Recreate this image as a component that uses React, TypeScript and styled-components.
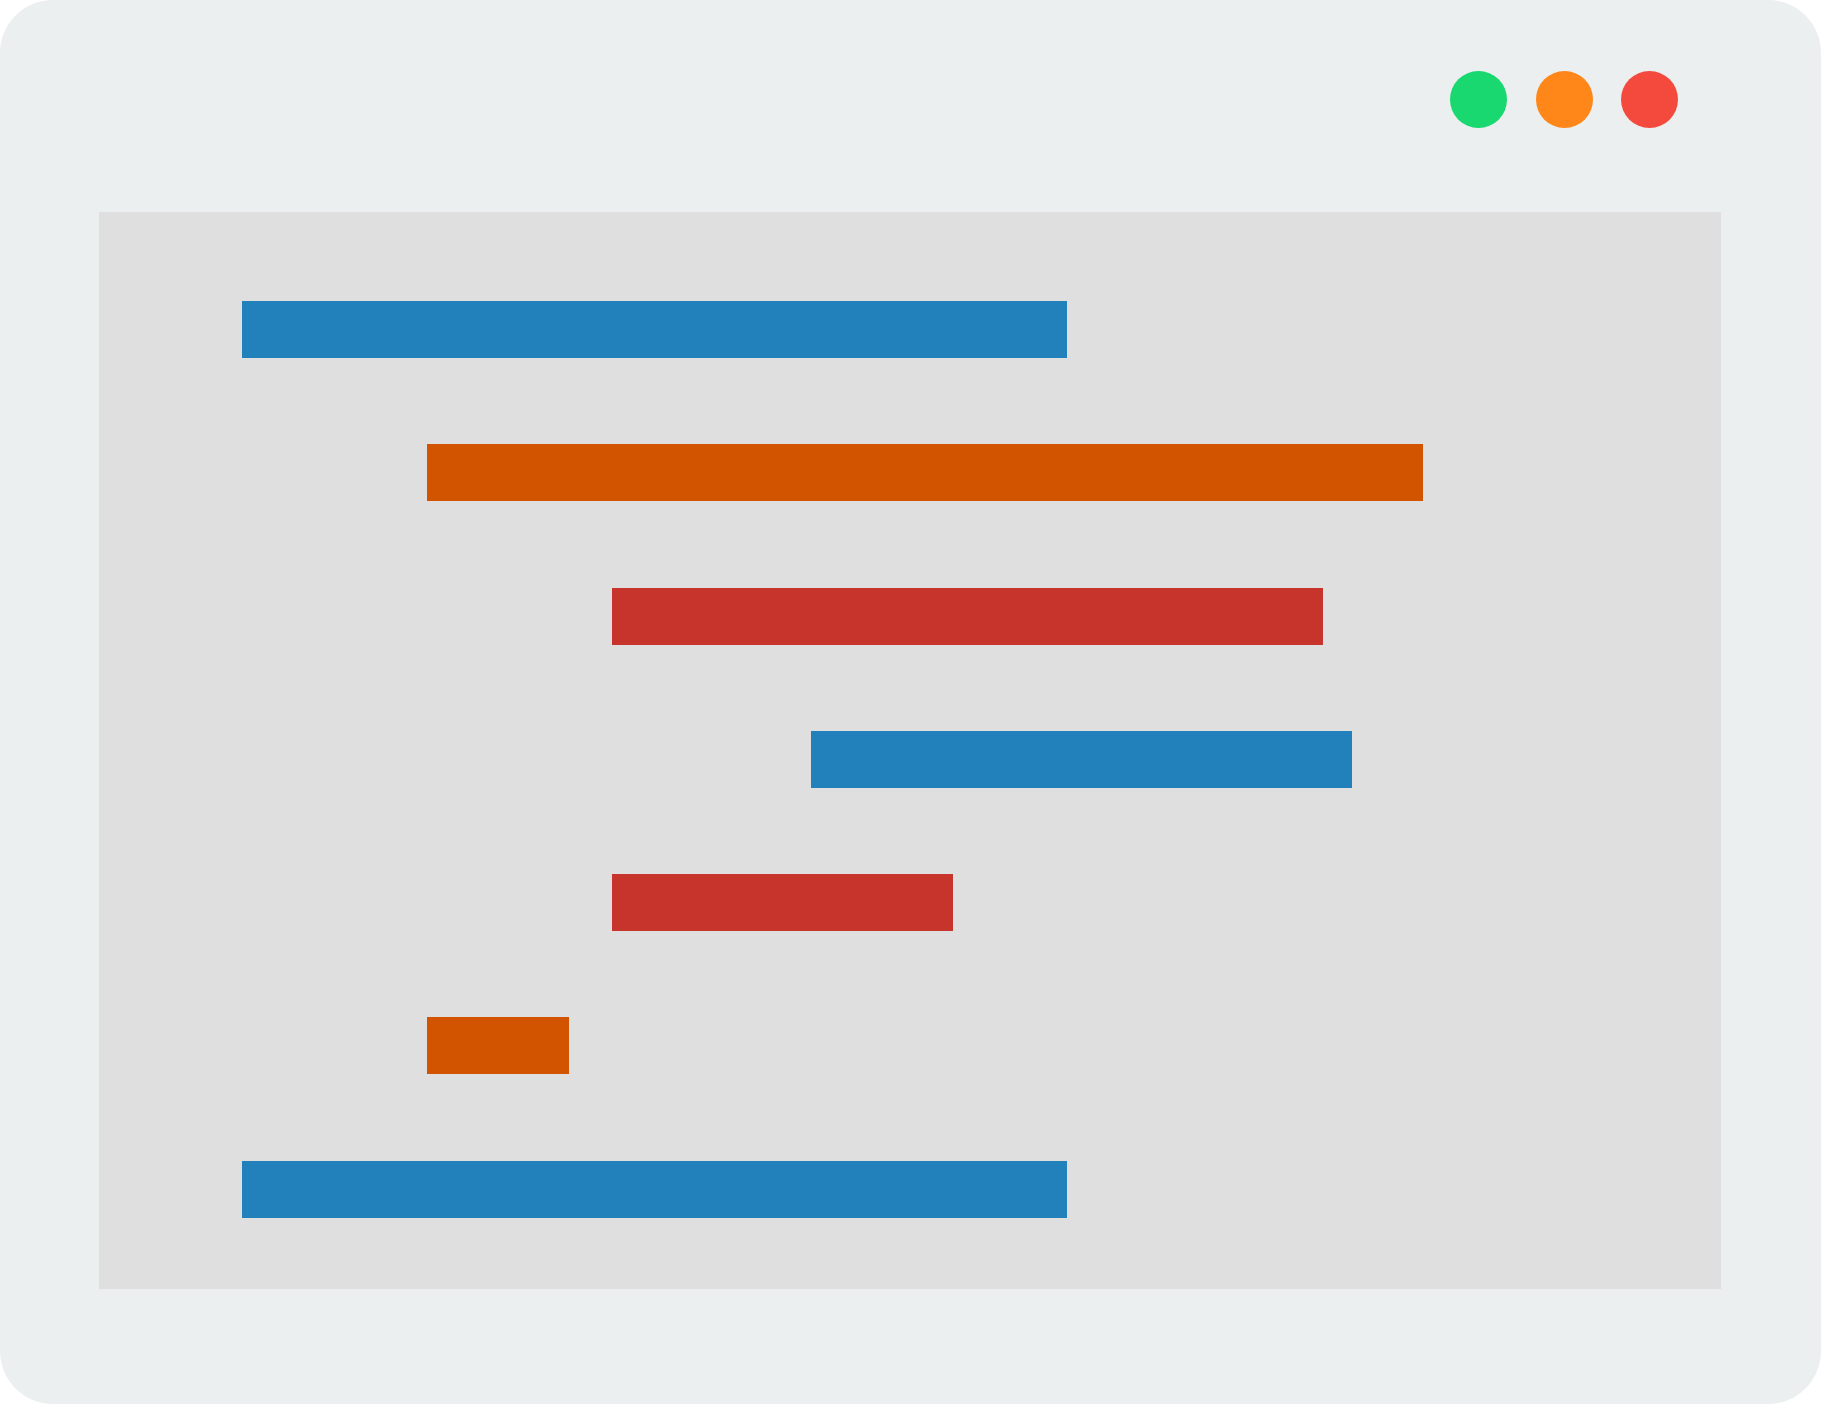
import React from "react";
import styled, { createGlobalStyle } from "styled-components";

const GlobalStyle = createGlobalStyle`
  html, body {
    margin: 0;
    padding: 0;
    background: #ffffff;
    font-family: "Liberation Sans", Arial, sans-serif;
  }
  * { box-sizing: border-box; }
`;

const Window = styled.div`
  width: 1821px;
  height: 1404px;
  background: #ebeff0;
  border-radius: 53px;
  display: flex;
  flex-direction: column;
  overflow: hidden;
`;

const TitleBar = styled.div`
  height: 212px;
  display: flex;
  justify-content: flex-end;
  align-items: flex-start;
  padding: 71px 143px 0 0;
  gap: 28.5px;
`;

const Dot = styled.span<{ $color: string }>`
  width: 57px;
  height: 57px;
  border-radius: 50%;
  background: ${(p) => p.$color};
  display: block;
`;

const Panel = styled.div`
  margin: 0 100px 0 99px;
  height: 1077px;
  background: #dfdfdf;
  display: flex;
  flex-direction: column;
  padding-top: 89px;
  gap: 86.3px;
`;

const Bar = styled.div<{ $color: string; $offset: number; $width: number }>`
  height: 57px;
  flex: none;
  background: ${(p) => p.$color};
  margin-left: ${(p) => p.$offset}px;
  width: ${(p) => p.$width}px;
`;

const BLUE = "#2281ba";
const ORANGE = "#d35400";
const RED = "#c7342b";

const bars = [
  { color: BLUE, offset: 143, width: 825 },
  { color: ORANGE, offset: 328, width: 996 },
  { color: RED, offset: 513, width: 711 },
  { color: BLUE, offset: 712, width: 541 },
  { color: RED, offset: 513, width: 341 },
  { color: ORANGE, offset: 328, width: 142 },
  { color: BLUE, offset: 143, width: 825 },
];

export default function App() {
  return (
    <>
      <GlobalStyle />
      <Window>
        <TitleBar>
          <Dot $color="#19d86f" />
          <Dot $color="#ff8619" />
          <Dot $color="#f44a3e" />
        </TitleBar>
        <Panel>
          {bars.map((b, i) => (
            <Bar key={i} $color={b.color} $offset={b.offset} $width={b.width} />
          ))}
        </Panel>
      </Window>
    </>
  );
}
